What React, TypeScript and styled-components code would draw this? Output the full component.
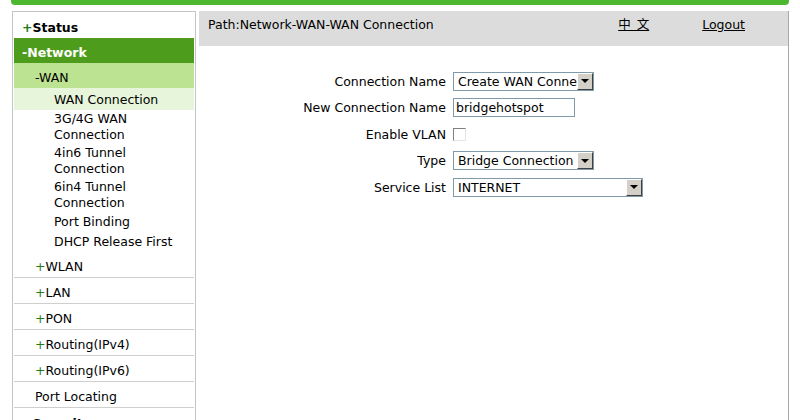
import React from "react";
import styled, { createGlobalStyle } from "styled-components";

const GlobalStyle = createGlobalStyle`
  body {
    margin: 0;
    background: #ffffff;
    font-family: "DejaVu Sans", Verdana, sans-serif;
    font-size: 12.5px;
    color: #000000;
  }
`;

// Styled components
const Page = styled.div`
  width: 778px;
  margin-left: 11px;
  height: 420px;
  overflow: hidden;
`;

const TopBar = styled.div`
  height: 5px;
  background-color: #4cb72f;
  border-radius: 0 0 4px 4px;
`;

const Main = styled.div`
  display: flex;
  gap: 3px;
  margin-top: 6px;
  height: 409px;
`;

const SideBox = styled.div`
  width: 180px;
  flex: none;
  border: 1px solid #c4c4c4;
  border-bottom: none;
  padding: 0 1px;
  margin-left: 1px;
`;

const Row = styled.div<{ $h: number }>`
  display: flex;
  align-items: center;
  box-sizing: border-box;
  height: ${(p) => p.$h}px;
  padding-top: 4px;
  white-space: nowrap;
`;

const TopItem = styled(Row)`
  padding-left: 8px;
  font-weight: bold;
`;

const Plus = styled.span<{ $bold?: boolean }>`
  color: #1f7a14;
  font-weight: ${(p) => (p.$bold ? "bold" : "normal")};
`;

const OpenGroup = styled(Row)`
  padding-left: 8px;
  background-color: #4e9c1c;
  color: #ffffff;
  font-weight: bold;
`;

const SubHead = styled(Row)`
  padding-left: 21px;
  background-color: #bce391;
`;

const Leaf = styled.div<{ $active?: boolean; $single?: boolean }>`
  padding: ${(p) => (p.$active ? "4px 0 2px" : p.$single ? "2px 0" : "1px 0")};
  padding-left: 40px;
  line-height: 16px;
  background-color: ${(p) => (p.$active ? "#e7f5da" : "transparent")};
  width: ${(p) => (p.$active ? "auto" : "124px")};
`;

const MenuRow = styled(Row)`
  padding-left: 21px;
  border-bottom: 1px solid #cfcfcf;
`;

const Content = styled.div`
  flex: 1;
  border-right: 1px solid #a9a9a9;
`;

const Header = styled.div`
  height: 35px;
  background-color: #dcdcdc;
  display: flex;
  align-items: flex-start;
  padding: 6px 43px 0 9px;
  box-sizing: border-box;
  line-height: 16px;
`;

const PathText = styled.div`
  flex: 1;
`;

const HeaderLinks = styled.div`
  display: flex;
  gap: 53px;
`;

const HeaderLink = styled.a`
  color: #000000;
  text-decoration: underline;
  font-family: "DejaVu Sans", "Noto Sans CJK SC", sans-serif;
  word-spacing: 2px;
  cursor: pointer;
`;

const Form = styled.div`
  display: grid;
  grid-template-columns: 247px 1fr;
  grid-template-rows: 26px 26.5px 27px 26.5px 26px;
  column-gap: 7px;
  margin-top: 22px;
  align-items: center;
`;

const Label = styled.div`
  justify-self: end;
  white-space: nowrap;
`;

const Field = styled.div`
  display: flex;
  align-items: center;
`;

const SelectBox = styled.div<{ $width: number }>`
  position: relative;
  width: ${(p) => p.$width}px;
  height: 19px;
  box-sizing: border-box;
  border: 1px solid #7f9aab;
  background: #ffffff;
  line-height: 17px;
  padding-left: 4px;
  overflow: hidden;
  white-space: nowrap;
`;

const DropButton = styled.div`
  position: absolute;
  top: 0;
  right: 0;
  width: 16px;
  height: 17px;
  box-sizing: border-box;
  background: #d4d0c8;
  border-top: 1px solid #ffffff;
  border-left: 1px solid #ffffff;
  border-right: 1px solid #404040;
  border-bottom: 1px solid #404040;
  display: flex;
  align-items: center;
  justify-content: center;

  &::after {
    content: "";
    border-left: 4px solid transparent;
    border-right: 4px solid transparent;
    border-top: 4px solid #000000;
  }
`;

const TextInput = styled.div`
  width: 122px;
  height: 19px;
  box-sizing: border-box;
  border: 1px solid #7f9aab;
  line-height: 17px;
  padding-left: 2px;
`;

const CheckBox = styled.div`
  width: 13px;
  height: 13px;
  box-sizing: border-box;
  border-top: 1px solid #808080;
  border-left: 1px solid #808080;
  border-right: 1px solid #e4e4e4;
  border-bottom: 1px solid #e4e4e4;
  background: #ffffff;
`;

function Select({ width, value }: { width: number; value: string }) {
  return (
    <SelectBox $width={width}>
      {value}
      <DropButton />
    </SelectBox>
  );
}

const menuRows = ["WLAN", "LAN", "PON", "Routing(IPv4)", "Routing(IPv6)"];

export default function App() {
  return (
    <>
      <GlobalStyle />
      <Page>
        <TopBar />
        <Main>
          <SideBox>
            <TopItem $h={26}>
              <Plus $bold>+</Plus>Status
            </TopItem>
            <OpenGroup $h={25}>-Network</OpenGroup>
            <SubHead $h={25}>-WAN</SubHead>
            <div>
              <Leaf $active>WAN Connection</Leaf>
              <Leaf>3G/4G WAN Connection</Leaf>
              <Leaf>4in6 Tunnel Connection</Leaf>
              <Leaf>6in4 Tunnel Connection</Leaf>
              <Leaf $single>Port Binding</Leaf>
              <Leaf $single>DHCP Release First</Leaf>
            </div>
            {menuRows.map((name) => (
              <MenuRow key={name} $h={26}>
                <Plus>+</Plus>
                {name}
              </MenuRow>
            ))}
            <MenuRow $h={26}>Port Locating</MenuRow>
            <TopItem $h={26}>
              <Plus $bold>+</Plus>Security
            </TopItem>
          </SideBox>
          <Content>
            <Header>
              <PathText>Path:Network-WAN-WAN Connection</PathText>
              <HeaderLinks>
                <HeaderLink>中 文</HeaderLink>
                <HeaderLink>Logout</HeaderLink>
              </HeaderLinks>
            </Header>
            <Form>
              <Label>Connection Name</Label>
              <Field>
                <Select width={141} value="Create WAN Connection" />
              </Field>
              <Label>New Connection Name</Label>
              <Field>
                <TextInput>bridgehotspot</TextInput>
              </Field>
              <Label>Enable VLAN</Label>
              <Field>
                <CheckBox />
              </Field>
              <Label>Type</Label>
              <Field>
                <Select width={141} value="Bridge Connection" />
              </Field>
              <Label>Service List</Label>
              <Field>
                <Select width={190} value="INTERNET" />
              </Field>
            </Form>
          </Content>
        </Main>
      </Page>
    </>
  );
}
